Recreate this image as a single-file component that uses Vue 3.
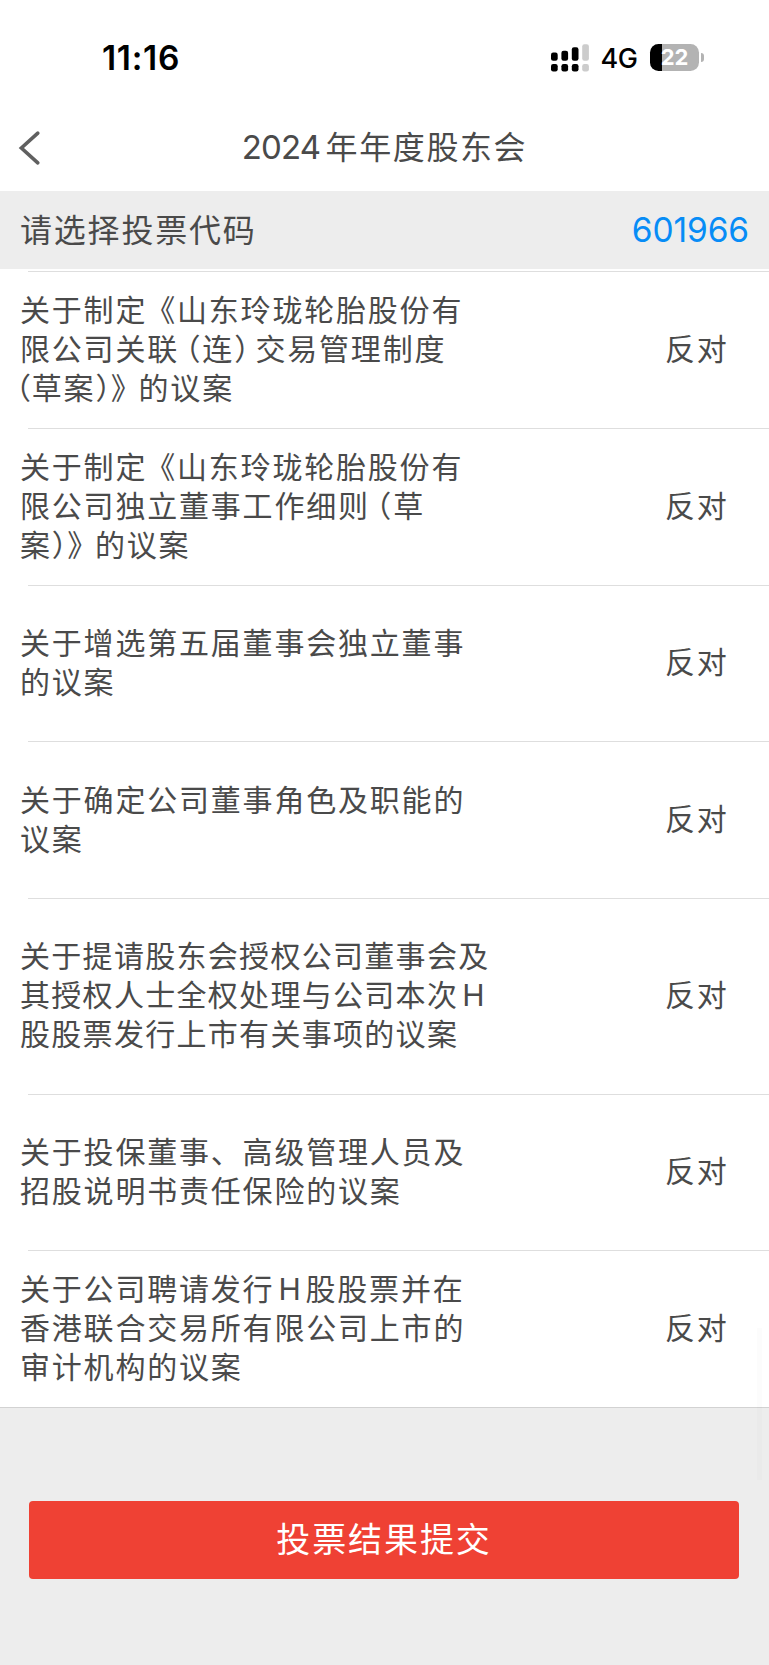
<template>
    <div class="page">
        <div class="status-bar">
            <span class="time">11:16</span>
            <div class="status-icons">
                <svg class="signal" width="40" height="28" viewBox="0 0 40 28">
                    <g v-for="bar in signalBars" :key="bar.x" :fill="bar.color">
                        <rect :x="bar.x" :y="bar.y" width="6.7" :height="16.8 - bar.y" rx="2.2" />
                        <rect :x="bar.x" y="20" width="6.7" height="7.4" rx="2.2" />
                    </g>
                </svg>
                <span class="network">4G</span>
                <div class="battery">
                    <span class="battery-num">22</span>
                </div>
                <span class="battery-cap"></span>
            </div>
        </div>

        <div class="nav-bar">
            <svg class="back" width="24" height="36" viewBox="0 0 24 36">
                <path d="M19.8 3.2L3.4 18L19.8 32.8" fill="none" stroke="#606060" stroke-width="3.6" stroke-linecap="round" />
            </svg>
            <h1 class="title"><span class="title-num">2024</span>年年度股东会</h1>
        </div>

        <div class="code-bar">
            <span class="code-label">请选择投票代码</span>
            <span class="code-value">601966</span>
        </div>

        <ul class="vote-list">
            <li v-for="(item, index) in voteList" :key="index" class="vote-item" :class="{ tall: item.tall }">
                <div class="vote-title" :class="{ tight: item.tall }">
                    <div v-for="(line, i) in item.lines" :key="i" class="line">
                        <span v-for="(part, k) in splitLine(line)" :key="k" :class="partClass(part, k, line)">{{ part }}</span>
                    </div>
                </div>
                <span class="vote-result">{{ item.result }}</span>
            </li>
        </ul>

        <div class="footer">
            <button class="submit-button">投票结果提交</button>
        </div>

        <div class="scroll-thumb"></div>
    </div>
</template>

<script setup>
import { ref } from 'vue';

const signalBars = [
    { x: 1, y: 8.6, color: '#000' },
    { x: 11.4, y: 6.8, color: '#000' },
    { x: 21.8, y: 3.3, color: '#000' },
    { x: 32.2, y: 0.3, color: '#ccc' },
];

const voteList = ref([
    { lines: ['关于制定《山东玲珑轮胎股份有', '限公司关联（连）交易管理制度', '（草案）》的议案'], result: '反对' },
    { lines: ['关于制定《山东玲珑轮胎股份有', '限公司独立董事工作细则（草', '案）》的议案'], result: '反对' },
    { lines: ['关于增选第五届董事会独立董事', '的议案'], result: '反对' },
    { lines: ['关于确定公司董事角色及职能的', '议案'], result: '反对' },
    { lines: ['关于提请股东会授权公司董事会及', '其授权人士全权处理与公司本次H', '股股票发行上市有关事项的议案'], result: '反对', tall: true },
    { lines: ['关于投保董事、高级管理人员及', '招股说明书责任保险的议案'], result: '反对' },
    { lines: ['关于公司聘请发行H股股票并在', '香港联合交易所有限公司上市的', '审计机构的议案'], result: '反对' },
]);

// 标点和字母单独拆出来，方便调整间距
function splitLine(line) {
    return line.split(/([（）《》H])/).filter((s) => s);
}

function partClass(part, k, line) {
    if (part === '（') return k === 0 ? 'half paren-first' : 'half paren-left';
    if (part === '）') return line.includes('）》') ? 'half paren-close' : 'half paren-right';
    if (part === '《') return 'half book-left';
    if (part === '》') return 'half book-right';
    if (part === 'H') return 'latin';
    return '';
}
</script>

<style>
body {
    margin: 0;
    background-color: #ededed;
}
</style>

<style scoped>
.page {
    position: relative;
    width: 769px;
    height: 1665px;
    overflow: hidden;
    display: flex;
    flex-direction: column;
    background-color: #ededed;
    color: #4a4a4a;
    font-family: Inter, "Noto Sans CJK SC", sans-serif;
    text-spacing-trim: space-all;
}

.status-bar {
    flex: none;
    height: 104px;
    box-sizing: border-box;
    padding: 11px 65px 0 102px;
    display: flex;
    justify-content: space-between;
    align-items: center;
    background-color: #fff;
    color: #000;
}

.time {
    font-size: 33.5px;
    font-weight: 600;
    letter-spacing: 0.7px;
}

.status-icons {
    display: flex;
    align-items: center;
}

.network {
    margin-left: 10.5px;
    width: 49.5px;
    padding-top: 1px;
    font-size: 27px;
    font-weight: 500;
    letter-spacing: -0.5px;
}

.battery {
    width: 49px;
    height: 27px;
    border-radius: 8.5px;
    background: linear-gradient(to right, #000 11.5px, #b3b3b3 11.5px);
    display: flex;
    align-items: center;
    justify-content: center;
}

.battery-num {
    color: #fff;
    font-size: 22px;
    font-weight: 700;
    line-height: 27px;
}

.battery-cap {
    width: 3px;
    height: 9px;
    margin-left: 2px;
    border-radius: 0 3px 3px 0;
    background-color: #b3b3b3;
}

.nav-bar {
    flex: none;
    height: 87px;
    display: grid;
    grid-template-columns: 60px 1fr 60px;
    align-items: center;
    background-color: #fff;
}

.back {
    margin-left: 18px;
}

.title {
    margin: 0;
    text-align: center;
    font-size: 32px;
    font-weight: 400;
    line-height: 46px;
    letter-spacing: 1.6px;
    white-space: nowrap;
}

.title-num {
    font-size: 33px;
    letter-spacing: -0.9px;
    margin-right: 5.5px;
}

.code-bar {
    flex: none;
    height: 78px;
    box-sizing: border-box;
    padding: 0 20px;
    display: flex;
    justify-content: space-between;
    align-items: center;
}

.code-label {
    padding-bottom: 4px;
    font-size: 32px;
    letter-spacing: 1.8px;
}

.code-value {
    color: #078cf6;
    font-size: 33.5px;
    letter-spacing: -0.1px;
}

.vote-list {
    flex: none;
    margin: 0;
    padding: 2.4px 0 0;
    list-style: none;
    background-color: #fff;
    border-bottom: 1px solid #d2d2d2;
}

.vote-item {
    height: 156.65px;
    box-sizing: border-box;
    padding: 0 40.5px 0 20px;
    display: flex;
    justify-content: space-between;
    align-items: center;
    background: linear-gradient(#dedede, #dedede) 28px 0 / 100% 1px no-repeat;
}

.vote-item.tall {
    height: 195.7px;
}

.vote-title {
    font-size: 30px;
    line-height: 39px;
    letter-spacing: 1.8px;
    white-space: nowrap;
}

.vote-title.tight {
    letter-spacing: 1.3px;
}

.line {
    height: 39px;
}

/* 半宽标点 */
.half {
    font-feature-settings: "halt";
}

.paren-first {
    margin-left: -4px;
    letter-spacing: 0.8px;
}

.paren-left {
    margin-left: 6.5px;
}

.paren-right {
    margin-right: 4.5px;
}

.paren-close {
    letter-spacing: 0.3px;
}

.book-left {
    margin-left: 13px;
}

.book-right {
    margin-right: 11px;
}

.latin {
    margin: 0 3px 0 4px;
}

.vote-result {
    font-size: 30px;
    line-height: 39px;
    letter-spacing: 1.8px;
}

.footer {
    flex: 1;
    padding: 93px 30px 0 29px;
}

.submit-button {
    display: block;
    width: 100%;
    height: 78px;
    box-sizing: border-box;
    padding: 0 0 4px;
    border: none;
    border-radius: 4px;
    background-color: #ef4134;
    color: #fff;
    font-family: inherit;
    font-size: 34px;
    letter-spacing: 1.9px;
    cursor: pointer;
}

.scroll-thumb {
    position: absolute;
    right: 7px;
    top: 1328px;
    width: 5px;
    height: 152px;
    background-color: rgba(0, 0, 0, 0.012);
}
</style>
